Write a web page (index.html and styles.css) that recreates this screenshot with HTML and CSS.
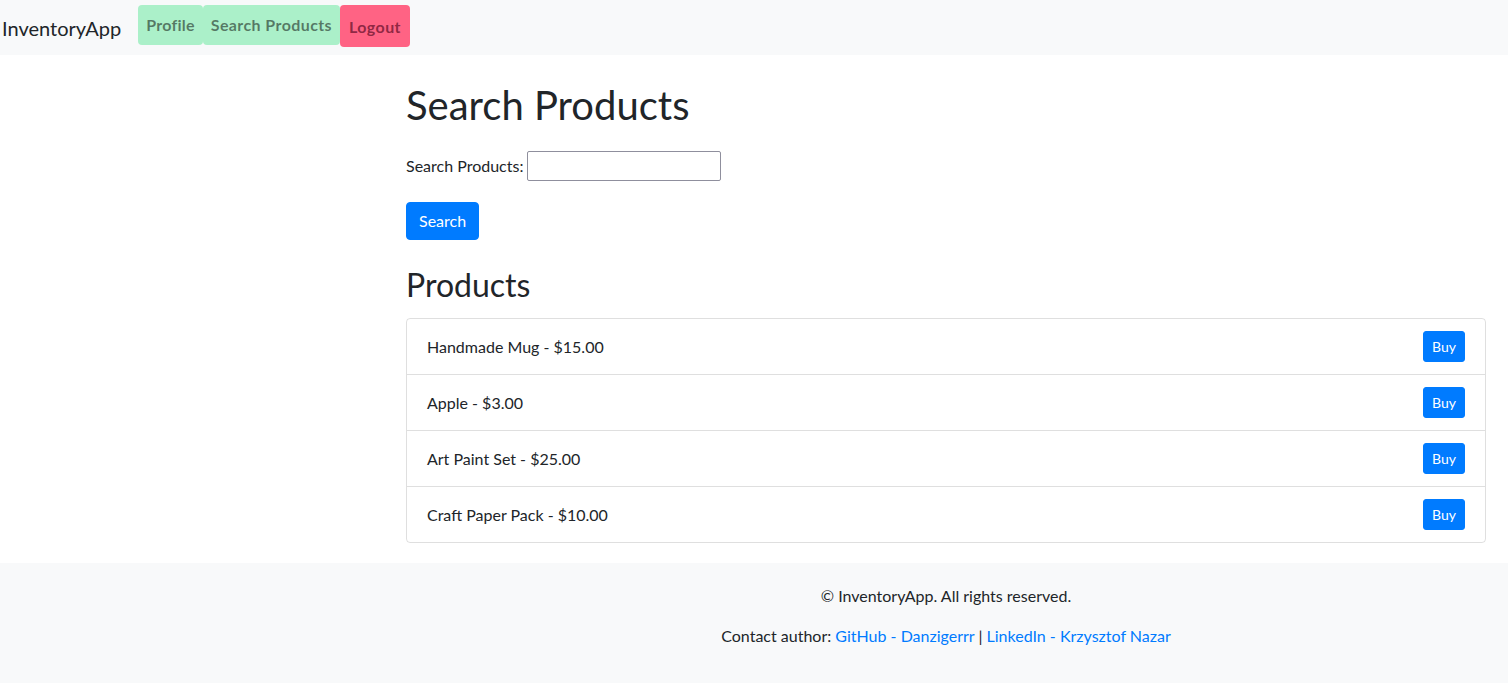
FILE: index.html
```html
<!DOCTYPE html>
<html lang="en">
<head>
<meta charset="utf-8">
<title>Search Products - InventoryApp</title>
<link rel="stylesheet" href="styles.css">
</head>
<body>
<nav class="navbar">
  <a class="brand" href="#">InventoryApp</a>
  <div class="nav-links">
    <a class="nav-btn nav-green nav-tight" href="#">Profile</a>
    <a class="nav-btn nav-green" href="#">Search Products</a>
    <button class="nav-btn nav-red" type="button">Logout</button>
  </div>
</nav>
<main class="main">
  <h1 class="title">Search Products</h1>
  <form class="search-form">
    <div class="search-row">
      <label class="search-label" for="q">Search Products:</label>
      <input class="search-input" id="q" type="text">
    </div>
    <button class="btn-primary" type="button">Search</button>
  </form>
  <h2 class="subtitle">Products</h2>
  <ul class="list">
    <li class="item"><span>Handmade Mug - $15.00</span><button class="btn-buy" type="button">Buy</button></li>
    <li class="item"><span>Apple - $3.00</span><button class="btn-buy" type="button">Buy</button></li>
    <li class="item"><span>Art Paint Set - $25.00</span><button class="btn-buy" type="button">Buy</button></li>
    <li class="item"><span>Craft Paper Pack - $10.00</span><button class="btn-buy" type="button">Buy</button></li>
  </ul>
</main>
<footer class="footer">
  <div class="footer-inner">
    <p class="footer-line">© InventoryApp. All rights reserved.</p>
    <p class="footer-line">Contact author: <a href="#">GitHub - Danzigerrr</a> | <a href="#">LinkedIn - Krzysztof Nazar</a></p>
  </div>
</footer>
</body>
</html>
```
FILE: styles.css
```css
* { box-sizing: border-box; }
body {
  margin: 0;
  font-family: Lato, "Open Sans", sans-serif;
  font-size: 16px;
  line-height: 1.5;
  color: #212529;
  background: #fff;
}
a { color: #007bff; text-decoration: none; }

.navbar {
  display: flex;
  align-items: flex-start;
  height: 55px;
  padding: 5px 0 0 2px;
  background: #f8f9fa;
}
.brand {
  font-size: 20px;
  line-height: 30px;
  margin-top: 8px;
  margin-right: 17px;
  color: #212529;
}
.nav-links { display: flex; align-items: flex-start; }
.nav-btn {
  display: block;
  padding: 8px 8px;
  font: inherit;
  font-weight: 700;
  line-height: 24px;
  letter-spacing: 0.4px;
  color: rgba(0,0,0,.5);
  border: 0;
  border-radius: 4px;
}
.nav-tight { letter-spacing: 0.25px; }
.nav-green { background: #abf0c9; }
.nav-red {
  background: #ff6384;
  padding: 10px 9px 8px;
  color: rgba(70,0,25,.62);
}

.main {
  margin-left: 406px;
  width: 1080px;
  padding: 26px 0 20px;
}
.title {
  margin: 0 0 8px;
  font-size: 40px;
  font-weight: 400;
  line-height: 48px;
}
.search-form { margin: 0; padding-top: 14px; }
.search-row {
  display: flex;
  align-items: center;
  height: 30px;
}
.search-label { margin-right: 4px; }
.search-input {
  width: 194px;
  height: 30px;
  border: 1px solid #8f8f9d;
  border-radius: 2px;
  font: inherit;
  padding: 1px 2px;
}
.btn-primary {
  display: block;
  margin-top: 21px;
  height: 38px;
  padding: 6px 12px;
  font: inherit;
  line-height: 24px;
  color: #fff;
  background: #007bff;
  border: 1px solid #007bff;
  border-radius: 4px;
}
.subtitle {
  margin: 26px 0 14px;
  font-size: 32px;
  font-weight: 400;
  line-height: 38px;
}
.list {
  list-style: none;
  margin: 0;
  padding: 0;
  border: 1px solid rgba(0,0,0,.125);
  border-radius: 4px;
}
.item {
  display: flex;
  align-items: center;
  justify-content: space-between;
  padding: 12px 20px;
  height: 55px;
}
.item + .item { border-top: 1px solid rgba(0,0,0,.125); height: 56px; }
.btn-buy {
  height: 31px;
  padding: 4px 8px;
  font: inherit;
  font-size: 14px;
  line-height: 21px;
  color: #fff;
  background: #007bff;
  border: 1px solid #007bff;
  border-radius: 3px;
}

.footer {
  background: #f8f9fa;
  padding: 21px 0 40px;
}
.footer-inner {
  margin-left: 406px;
  width: 1080px;
  text-align: center;
}
.footer-line { margin: 0 0 16px; }
.footer-line:last-child { margin-bottom: 0; }
```
